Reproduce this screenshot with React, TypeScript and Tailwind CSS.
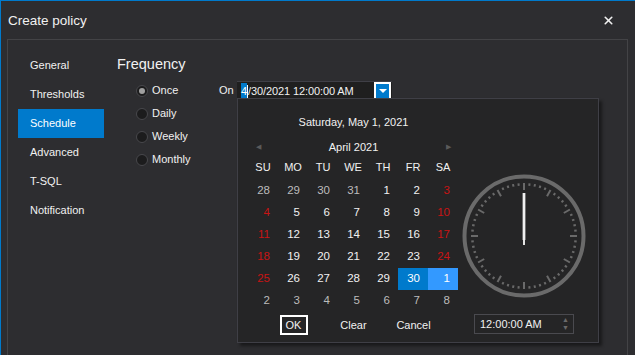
import { X } from "lucide-react";

const navItems = ["General", "Thresholds", "Schedule", "Advanced", "T-SQL", "Notification"];
const frequencies = ["Once", "Daily", "Weekly", "Monthly"];
const dayNames = ["SU", "MO", "TU", "WE", "TH", "FR", "SA"];

type Day = { n: number; other?: boolean; sel?: "main" | "light" };

const weeks: Day[][] = [
    [{ n: 28, other: true }, { n: 29, other: true }, { n: 30, other: true }, { n: 31, other: true }, { n: 1 }, { n: 2 }, { n: 3 }],
    [4, 5, 6, 7, 8, 9, 10].map((n) => ({ n })),
    [11, 12, 13, 14, 15, 16, 17].map((n) => ({ n })),
    [18, 19, 20, 21, 22, 23, 24].map((n) => ({ n })),
    [{ n: 25 }, { n: 26 }, { n: 27 }, { n: 28 }, { n: 29 }, { n: 30, sel: "main" }, { n: 1, other: true, sel: "light" }],
    [2, 3, 4, 5, 6, 7, 8].map((n) => ({ n, other: true })),
];

function Clock() {
    const cx = 65;
    const cy = 65;
    const ticks = [];
    for (let i = 0; i < 60; i++) {
        const a = (i * Math.PI) / 30;
        const s = Math.sin(a);
        const c = -Math.cos(a);
        const r1 = i % 5 === 0 ? 46 : 50.5;
        ticks.push(
            <line key={i} x1={cx + s * r1} y1={cy + c * r1} x2={cx + s * 53} y2={cy + c * 53} stroke="#6a6a6a" strokeWidth={2} />
        );
    }
    return (
        <svg width="130" height="130" viewBox="0 0 130 130">
            <circle cx={cx} cy={cy} r={59.5} fill="none" stroke="#6a6a6a" strokeWidth={4} />
            {ticks}
            <line x1={cx} y1={cy - 43} x2={cx} y2={cy + 4} stroke="#8a8a8a" strokeWidth={3.5} />
            <line x1={cx} y1={cy - 43} x2={cx} y2={cy + 9} stroke="#ffffff" strokeWidth={1.75} />
        </svg>
    );
}

function Calendar() {
    return (
        <div className="absolute left-0 top-[19px] w-[362px] h-[245px] bg-[#252526] border border-[#3f3f46] shadow-[3px_3px_3px_rgba(0,0,0,0.45)] flex">
            <div className="w-[221px] pl-[10px] flex flex-col">
                <div className="mt-[15px] h-[16px] flex items-center justify-center text-[11px] text-[#f1f1f1]">
                    Saturday, May 1, 2021
                </div>
                <div className="mt-[9px] h-[16px] flex items-center justify-between text-[11px] text-[#f1f1f1]">
                    <span className="w-[20px] text-center text-[7px] text-[#5a5a5a]">◀</span>
                    <span>April 2021</span>
                    <span className="w-[20px] text-center text-[7px] text-[#5a5a5a]">▶</span>
                </div>
                <div className="mt-[2px] grid grid-cols-[repeat(7,30px)] h-[20px] items-center text-[11px] text-[#f1f1f1]">
                    {dayNames.map((d) => (
                        <div key={d} className="text-center">{d}</div>
                    ))}
                </div>
                <div className="mt-[3px] flex flex-col">
                    {weeks.map((w, i) => (
                        <div key={i} className="grid grid-cols-[repeat(7,30px)] h-[22px] text-[11.5px]">
                            {w.map((d, j) => {
                                const weekend = j === 0 || j === 6;
                                let color = d.other ? "text-[#bcbcbc]" : weekend ? "text-[#c81414]" : "text-[#f1f1f1]";
                                let bg = "";
                                if (d.sel === "main") {
                                    bg = "bg-[#007acc]";
                                    color = "text-white";
                                } else if (d.sel === "light") {
                                    bg = "bg-[#3399ff]";
                                    color = "text-white";
                                }
                                return (
                                    <div key={j} className={`flex items-center justify-end pr-[8px] ${bg} ${color}`}>
                                        {d.n}
                                    </div>
                                );
                            })}
                        </div>
                    ))}
                </div>
                <div className="mt-[3px] flex justify-center text-[11px] text-[#f1f1f1]">
                    <div className="w-[60px] flex justify-center">
                        <button className="w-[28px] h-[20px] border-2 border-white flex items-center justify-center">OK</button>
                    </div>
                    <div className="w-[60px] h-[20px] flex items-center justify-center">Clear</div>
                    <div className="w-[60px] h-[20px] flex items-center justify-center">Cancel</div>
                </div>
            </div>
            <div className="flex flex-col">
                <div className="mt-[72px]">
                    <Clock />
                </div>
                <div className="mt-[13px] ml-[15px] w-[100px] h-[20px] border border-[#4a4a4f] flex items-center justify-between pl-[5px] pr-[4px] text-[11px] text-[#f1f1f1]">
                    <span>12:00:00 AM</span>
                    <span className="flex flex-col text-[7px] leading-[8px] text-[#6a6a6a]">
                        <span>▲</span>
                        <span>▼</span>
                    </span>
                </div>
            </div>
        </div>
    );
}

export default function App() {
    return (
        <div className="w-[635px] h-[355px] overflow-hidden bg-[#2d2d30] border-l border-t border-[#007acc] flex flex-col font-['Liberation_Sans','Noto_Sans',sans-serif] text-[#f1f1f1]">
            <div className="h-[38px] shrink-0 flex items-center justify-between pl-[7px] pr-[20px]">
                <span className="text-[13.5px] mt-[2px]">Create policy</span>
                <X size={13} strokeWidth={3} className="text-[#f1f1f1]" />
            </div>
            <div className="ml-[6px] w-[621px] flex-1 border border-b-0 border-[#434346] flex">
                <div className="w-[96px] pl-[10px] pt-[11px] flex flex-col">
                    {navItems.map((item) => (
                        <div
                            key={item}
                            className={`h-[29px] pl-[12px] flex items-center text-[11px] ${item === "Schedule" ? "bg-[#007acc] text-white" : "text-[#f1f1f1]"}`}
                        >
                            {item}
                        </div>
                    ))}
                </div>
                <div className="pl-[13px] pt-[14px] flex flex-col">
                    <div className="text-[14.5px] h-[22px] flex items-center">Frequency</div>
                    <div className="mt-[3px] flex">
                        <div className="ml-[19px] w-[83px] flex flex-col">
                            {frequencies.map((f) => (
                                <label key={f} className="h-[23px] flex items-center gap-[4px] text-[11px]">
                                    <span className="w-[12px] h-[12px] rounded-full bg-[#1c1c1d] border border-[#48484c] flex items-center justify-center">
                                        {f === "Once" && <span className="w-[6px] h-[6px] rounded-full bg-[#a0a0a0]" />}
                                    </span>
                                    {f}
                                </label>
                            ))}
                        </div>
                        <div className="h-[23px] w-[18px] flex items-center text-[11px]">On</div>
                        <div className="relative">
                            <div className="w-[155px] h-[19px] mt-[2px] bg-[#1f1f1f] border-t border-[#3f3f46] flex items-center justify-between text-[11px]">
                                <span className="pl-[4px] flex items-center tracking-[-0.1px]">
                                    <span className="bg-[#007acc] text-white">4</span>
                                    <span className="w-px h-[13px] bg-white" />
                                    <span>/30/2021 12:00:00 AM</span>
                                </span>
                                <span className="w-[17px] h-[19px] mr-[1px] border-2 border-white bg-[#007acc] flex items-center justify-center">
                                    <span className="w-0 h-0 border-l-[4px] border-r-[4px] border-t-[4px] border-l-transparent border-r-transparent border-t-white" />
                                </span>
                            </div>
                            <Calendar />
                        </div>
                    </div>
                </div>
            </div>
        </div>
    );
}
